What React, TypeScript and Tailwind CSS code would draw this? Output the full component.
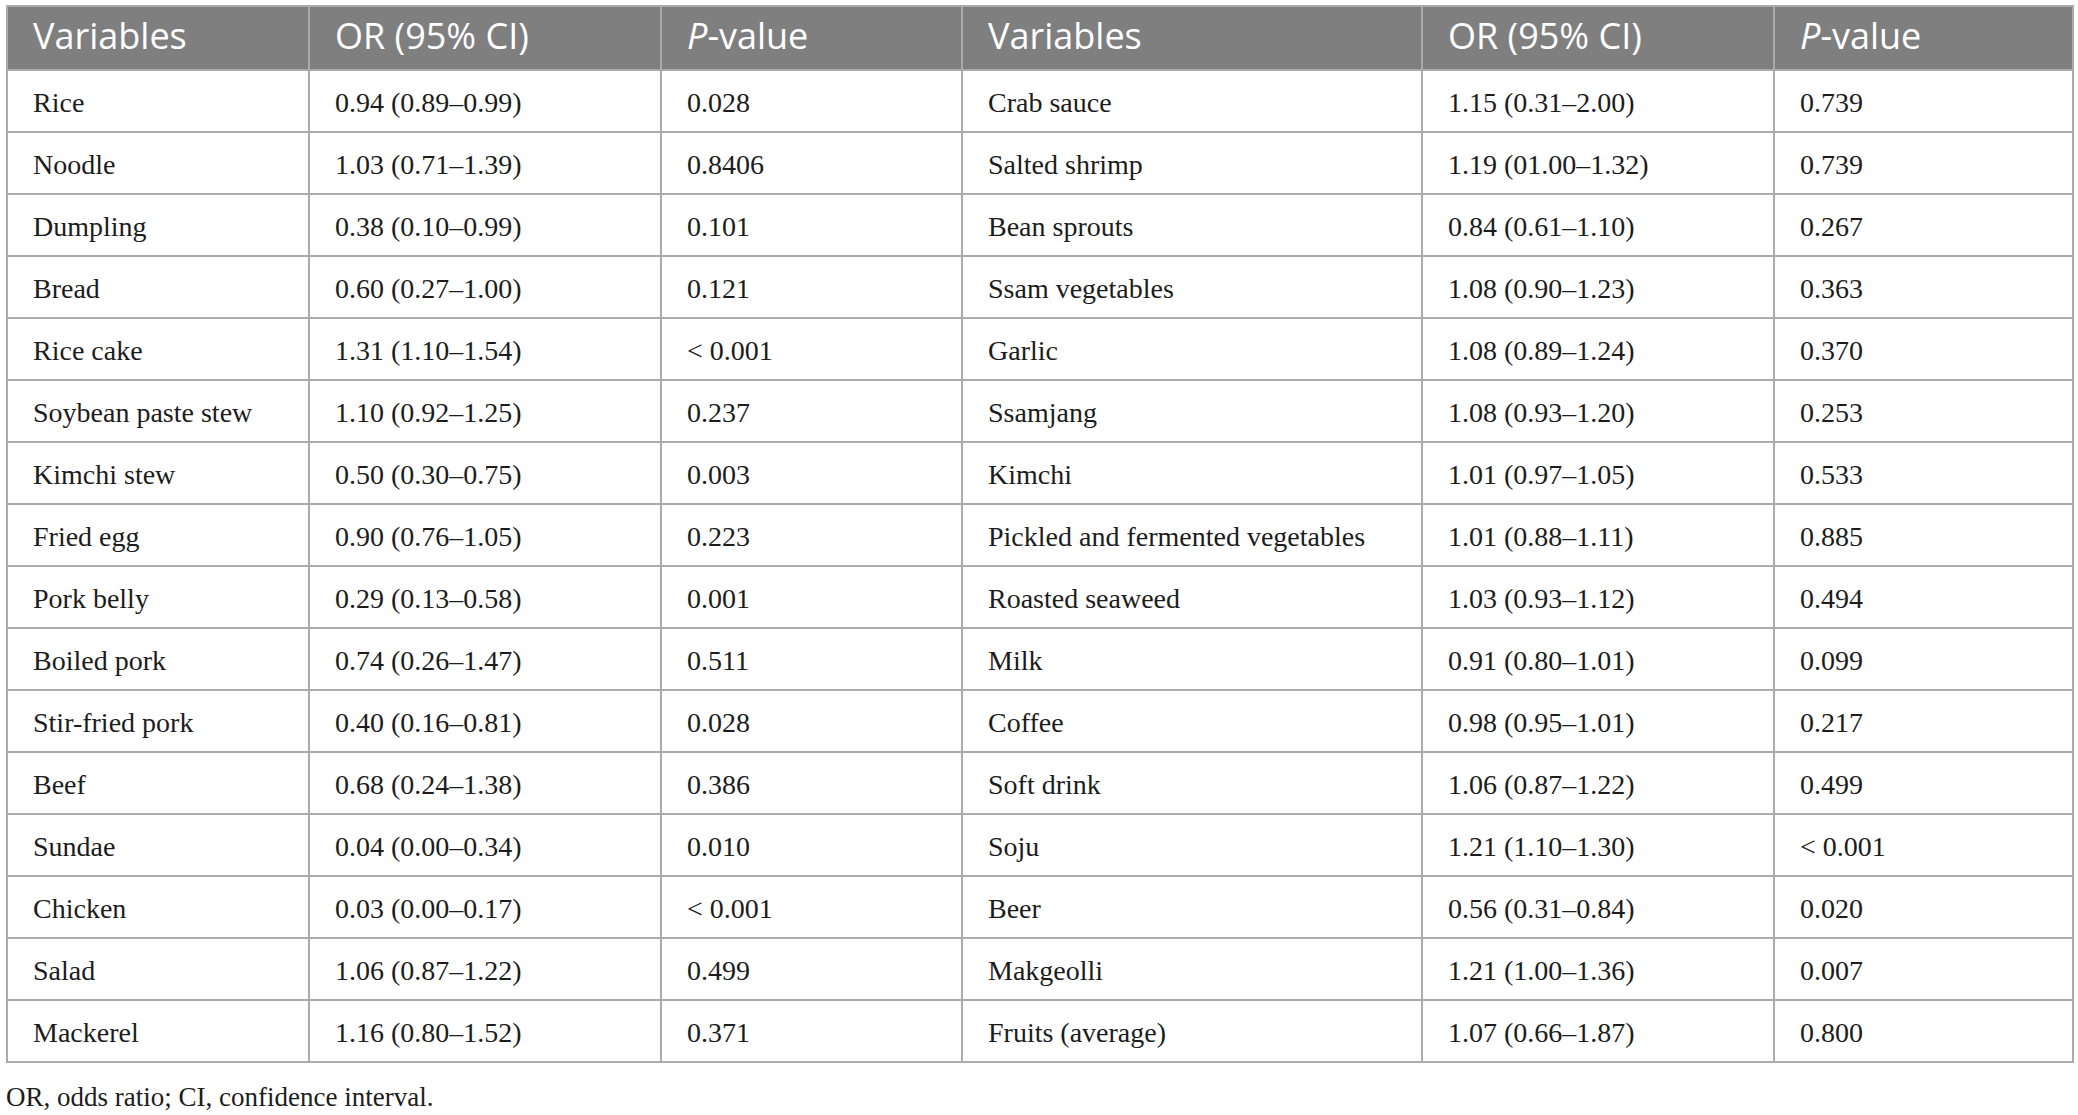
const left = [
  ["Rice", "0.94 (0.89–0.99)", "0.028"],
  ["Noodle", "1.03 (0.71–1.39)", "0.8406"],
  ["Dumpling", "0.38 (0.10–0.99)", "0.101"],
  ["Bread", "0.60 (0.27–1.00)", "0.121"],
  ["Rice cake", "1.31 (1.10–1.54)", "< 0.001"],
  ["Soybean paste stew", "1.10 (0.92–1.25)", "0.237"],
  ["Kimchi stew", "0.50 (0.30–0.75)", "0.003"],
  ["Fried egg", "0.90 (0.76–1.05)", "0.223"],
  ["Pork belly", "0.29 (0.13–0.58)", "0.001"],
  ["Boiled pork", "0.74 (0.26–1.47)", "0.511"],
  ["Stir-fried pork", "0.40 (0.16–0.81)", "0.028"],
  ["Beef", "0.68 (0.24–1.38)", "0.386"],
  ["Sundae", "0.04 (0.00–0.34)", "0.010"],
  ["Chicken", "0.03 (0.00–0.17)", "< 0.001"],
  ["Salad", "1.06 (0.87–1.22)", "0.499"],
  ["Mackerel", "1.16 (0.80–1.52)", "0.371"],
];

const right = [
  ["Crab sauce", "1.15 (0.31–2.00)", "0.739"],
  ["Salted shrimp", "1.19 (01.00–1.32)", "0.739"],
  ["Bean sprouts", "0.84 (0.61–1.10)", "0.267"],
  ["Ssam vegetables", "1.08 (0.90–1.23)", "0.363"],
  ["Garlic", "1.08 (0.89–1.24)", "0.370"],
  ["Ssamjang", "1.08 (0.93–1.20)", "0.253"],
  ["Kimchi", "1.01 (0.97–1.05)", "0.533"],
  ["Pickled and fermented vegetables", "1.01 (0.88–1.11)", "0.885"],
  ["Roasted seaweed", "1.03 (0.93–1.12)", "0.494"],
  ["Milk", "0.91 (0.80–1.01)", "0.099"],
  ["Coffee", "0.98 (0.95–1.01)", "0.217"],
  ["Soft drink", "1.06 (0.87–1.22)", "0.499"],
  ["Soju", "1.21 (1.10–1.30)", "< 0.001"],
  ["Beer", "0.56 (0.31–0.84)", "0.020"],
  ["Makgeolli", "1.21 (1.00–1.36)", "0.007"],
  ["Fruits (average)", "1.07 (0.66–1.87)", "0.800"],
];

const th =
  "border-2 border-[#ababab] bg-[#7f7f7f] pl-[25px] pb-[5px] text-left align-middle font-normal text-white text-[36px] leading-none font-['Open_Sans',sans-serif]";
const td = "border-2 border-[#ababab] pl-[25px] pt-[3px] text-left align-middle";

const PValue = () => (
  <>
    <i>P</i>-value
  </>
);

export default function App() {
  return (
    <div className="min-h-screen bg-white pl-[6px] pt-[5px]">
      <table className="w-[2066px] table-fixed border-collapse">
        <colgroup>
          <col className="w-[302px]" />
          <col className="w-[352px]" />
          <col className="w-[301px]" />
          <col className="w-[460px]" />
          <col className="w-[352px]" />
          <col className="w-[299px]" />
        </colgroup>
        <thead>
          <tr className="h-[64px]">
            <th className={th}>Variables</th>
            <th className={th}>OR (95% CI)</th>
            <th className={th}>
              <PValue />
            </th>
            <th className={th}>Variables</th>
            <th className={th}>OR (95% CI)</th>
            <th className={th}>
              <PValue />
            </th>
          </tr>
        </thead>
        <tbody className="font-['Liberation_Serif',serif] text-[28px] leading-tight text-[#1c1c1c]">
          {left.map((row, i) => (
            <tr key={row[0]} className="h-[62px]">
              <td className={td}>{row[0]}</td>
              <td className={td}>{row[1]}</td>
              <td className={td}>{row[2]}</td>
              <td className={td}>{right[i][0]}</td>
              <td className={td}>{right[i][1]}</td>
              <td className={td}>{right[i][2]}</td>
            </tr>
          ))}
        </tbody>
      </table>
      <p className="mt-[14px] font-['Liberation_Serif',serif] text-[27px] leading-[40px] text-[#1c1c1c]">
        OR, odds ratio; CI, confidence interval.
      </p>
    </div>
  );
}
